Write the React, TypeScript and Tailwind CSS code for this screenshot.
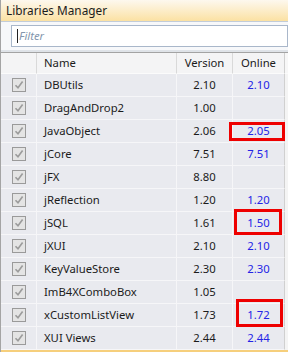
const libs: [string, string, string][] = [
  ['DBUtils', '2.10', '2.10'],
  ['DragAndDrop2', '1.00', ''],
  ['JavaObject', '2.06', '2.05'],
  ['jCore', '7.51', '7.51'],
  ['jFX', '8.80', ''],
  ['jReflection', '1.20', '1.20'],
  ['jSQL', '1.61', '1.50'],
  ['jXUI', '2.10', '2.10'],
  ['KeyValueStore', '2.30', '2.30'],
  ['ImB4XComboBox', '1.05', ''],
  ['xCustomListView', '1.73', '1.72'],
  ['XUI Views', '2.44', '2.44'],
];

function CheckBox() {
  return (
    <div className="w-[14px] h-[14px] border border-[#9a9a9a] bg-[#e4e4e4] flex items-center justify-center">
      <svg width="10" height="10" viewBox="0 0 10 10">
        <path d="M1.5 5.2 L4 7.8 L8.6 1.6" fill="none" stroke="#9b9b9b" strokeWidth="1.6" />
      </svg>
    </div>
  );
}

export default function App() {
  return (
    <div
      className="w-[288px] h-[352px] overflow-hidden bg-white border-l border-[#a4a4a4] text-[11.3px] text-[#1b1b1b]"
      style={{ fontFamily: '"Noto Sans", "Open Sans", sans-serif' }}
    >
      {/* Title */}
      <div className="h-[22px] flex items-center pl-[5px] pt-px bg-gradient-to-b from-[#fdf8ee] to-[#fbe1a2] border-b border-[#c2ccd8] text-[11.8px]">
        Libraries Manager
      </div>

      {/* Filter */}
      <div className="h-[28px] flex items-start pt-[3px] pl-[10px] bg-[#f7f8fa]">
        <div className="flex-1 h-[22px] bg-white border border-[#a9b7ca] flex items-center pl-[5px]">
          <span className="w-px h-[14px] bg-[#222]" />
          <span className="italic text-[#8496ad] ml-[1px]">Filter</span>
        </div>
      </div>

      {/* Table */}
      <div className="relative border-t-2 border-[#dfe3e8]">
        <div className="border-t border-[#a3a3a3] grid grid-cols-[36px_140px_56px_52px_1fr] bg-[#e9eaef]">
          <div className="h-[21px] bg-[#f4f4f5] border-r border-[#d9d9d9] border-b border-b-[#fbfbfb]" />
          <div className="h-[21px] pt-px bg-[#f4f4f5] border-r border-[#d9d9d9] border-b border-b-[#fbfbfb] flex items-center pl-[7px]">
            Name
          </div>
          <div className="h-[21px] pt-px bg-[#f4f4f5] border-r border-[#d9d9d9] border-b border-b-[#fbfbfb] flex items-center justify-center">
            Version
          </div>
          <div className="h-[21px] pt-px bg-[#f4f4f5] border-r border-[#cfcfcf] border-b border-b-[#fbfbfb] flex items-center justify-center">
            Online
          </div>
          <div className="h-[21px] bg-[#f7f7f7] border-b border-b-[#fbfbfb]" />

          {libs.map(([name, ver, online]) => (
            <div key={name} className="contents">
              <div className="h-[23px] border-r border-b border-[#f6f6f8] flex items-center justify-center">
                <CheckBox />
              </div>
              <div className="h-[23px] pt-px border-r border-b border-[#f6f6f8] flex items-center pl-[7px]">
                {name}
              </div>
              <div className="h-[23px] pt-px border-r border-b border-[#f6f6f8] flex items-center justify-center">
                {ver}
              </div>
              <div className="h-[23px] pt-px border-r border-b border-[#d0d0d0] border-b-[#f6f6f8] flex items-center justify-center text-[#2424e6]">
                {online}
              </div>
              <div className="h-[23px] bg-[#f4f4f4]" />
            </div>
          ))}
        </div>
        <div className="h-[2px] bg-[#f6cf7c]" />

        {/* annotation boxes */}
        <div className="absolute left-[228px] top-[70px] w-[56px] h-[19px] border-[3px] border-[#ee0000]" />
        <div className="absolute left-[233px] top-[157px] w-[48px] h-[26px] border-[3px] border-[#ee0000]" />
        <div className="absolute left-[235px] top-[247px] w-[47px] h-[28px] border-[3px] border-[#ee0000]" />
      </div>
    </div>
  );
}
